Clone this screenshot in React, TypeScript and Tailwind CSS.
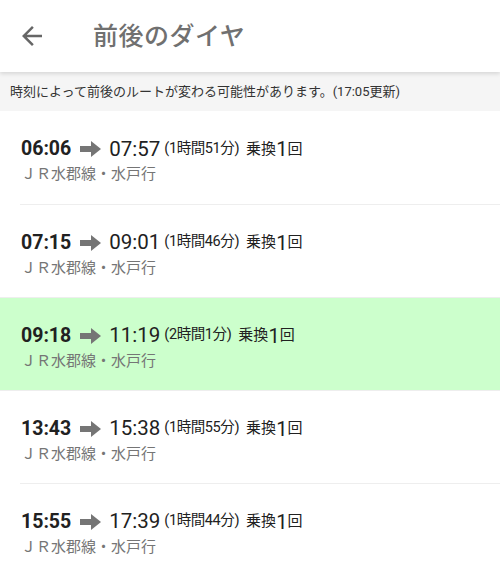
import React from "react";

const rows = [
  { dep: "06:06", arr: "07:57", dur: "1時間51分", hl: false },
  { dep: "07:15", arr: "09:01", dur: "1時間46分", hl: false },
  { dep: "09:18", arr: "11:19", dur: "2時間1分", hl: true },
  { dep: "13:43", arr: "15:38", dur: "1時間55分", hl: false },
  { dep: "15:55", arr: "17:39", dur: "1時間44分", hl: false },
];

function Arrow() {
  return (
    <svg width="21" height="16" viewBox="0 0 21 16" className="shrink-0">
      <path d="M0 5 H11 V0 L21 8 L11 16 V11 H0 Z" fill="#757575" />
    </svg>
  );
}

export default function App() {
  return (
    <div
      className="w-[500px] h-[562px] overflow-hidden bg-white"
      style={{ fontFamily: 'Roboto, "Noto Sans CJK JP", sans-serif' }}
    >
      <div className="relative z-10 h-[72px] flex items-center bg-white shadow-[0_2px_4px_rgba(0,0,0,0.12)]">
        <svg width="30" height="30" viewBox="0 0 24 24" className="ml-[17px]">
          <path d="M20 11H7.83l5.59-5.59L12 4l-8 8 8 8 1.41-1.41L7.83 13H20v-2z" fill="#666" />
        </svg>
        <div className="ml-[46px] text-[25px] text-[#707070] font-medium leading-none tracking-[0.5px]">前後のダイヤ</div>
      </div>
      <div className="h-[39px] flex items-center bg-[#f5f5f5] pl-[10px] text-[13px] text-[#333]">
        時刻によって前後のルートが変わる可能性があります。(17:05更新)
      </div>
      <div className="flex flex-col">
        {rows.map((r, i) => (
          <div key={i} className={r.hl ? "bg-[#ccffcc]" : "bg-white"}>
            <div className={(i === 0 ? "h-[93px]" : "h-[92px]") + " flex flex-col justify-center pl-[21px] pt-[4px]"}>
              <div className="flex items-center text-[#212121] leading-none h-[24px]">
                <span className="text-[19.5px] font-bold">{r.dep}</span>
                <span className="ml-[9px] mr-[8px] flex items-center"><Arrow /></span>
                <span className="text-[20.5px]">{r.arr}</span>
                <span className="ml-[4px] text-[14.5px] tracking-[-0.4px]">({r.dur})</span>
                <span className="ml-[7px] text-[15px]">乗換</span>
                <span className="text-[20px]">1</span>
                <span className="text-[15px]">回</span>
              </div>
              <div className="mt-[6px] text-[15px] text-[#757575] leading-none">ＪＲ水郡線・水戸行</div>
            </div>
            {i < rows.length - 1 && (
              <div className={r.hl || rows[i + 1]?.hl ? "h-px ml-0 bg-[#eeeeee]" : "h-px ml-[20px] bg-[#eeeeee]"} />
            )}
          </div>
        ))}
      </div>
    </div>
  );
}
